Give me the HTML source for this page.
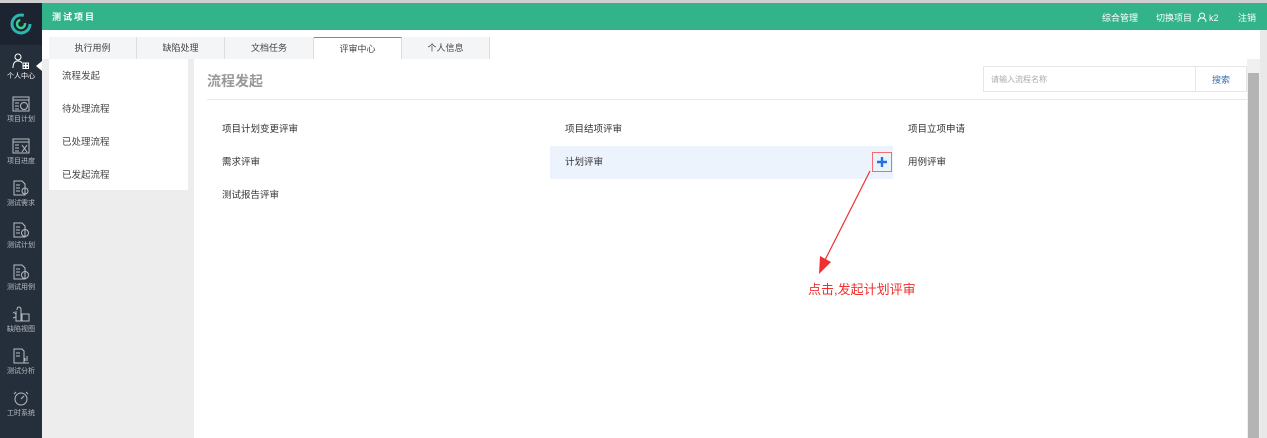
<!DOCTYPE html>
<html><head><meta charset="utf-8"><style>
*{margin:0;padding:0;box-sizing:border-box}
body{width:1267px;height:438px;overflow:hidden;background:#ededed;font-family:"Liberation Sans","Noto Sans CJK SC",sans-serif;position:relative;font-size:9px;color:#333}
.a{position:absolute}
.top{left:0;top:0;width:1267px;height:3px;background:#cfcfcf}
.green{left:42px;top:3px;width:1225px;height:27px;background:#33b38a;color:#fff}
.side{left:0;top:3px;width:42px;height:435px;background:#252f3b}
.logo{left:0;top:3px;width:42px;height:42px;background:#1b2430}
.si{left:0;width:42px;text-align:center;color:#b7bcc3;font-size:7px}
.si svg{display:block;margin:0 auto 2px}
.tab{top:37px;height:22px;background:#f4f5f7;border-right:1px solid #ddd;text-align:center;line-height:22px;font-size:9px;color:#444}
.lm{left:49px;width:139px;color:#444;font-size:9.5px;padding-left:13px}
.it{font-size:9.5px;color:#333}
</style></head><body>
<div class="a top"></div>
<div class="a side"></div>
<div class="a logo"><svg width="42" height="42" viewBox="0 0 42 42"><circle cx="21" cy="21" r="9" fill="none" stroke="#2bb7b0" stroke-width="3" stroke-dasharray="45 12"/><circle cx="21" cy="21" r="4" fill="none" stroke="#3ccf8e" stroke-width="2.5" stroke-dasharray="18 6"/></svg></div>
<div class="a green"><span class="a" style="left:10px;top:7px;font-size:9px;font-weight:bold;letter-spacing:2px">测试项目</span>
<span class="a" style="left:1060px;top:8px;font-size:9px">综合管理</span>
<span class="a" style="left:1114px;top:8px;font-size:9px">切换项目 <svg width="10" height="10" viewBox="0 0 10 10" style="vertical-align:-1px;margin-left:2px"><circle cx="5" cy="3.5" r="2.5" fill="none" stroke="#fff"/><path d="M1 10 Q1 6 5 6 Q9 6 9 10" fill="none" stroke="#fff"/></svg> k2</span>
<span class="a" style="left:1196px;top:8px;font-size:9px">注销</span></div>
<div class="a" style="left:36px;top:61px;border:5px solid transparent;border-right:6px solid #fff;border-left:0"></div>
<div class="a si" style="top:53px;color:#fff"><svg width="18" height="16" viewBox="0 0 18 16" fill="none" stroke="#fff"><circle cx="6" cy="4" r="3"/><path d="M1 15 Q1 8 6 8 Q9 8 10 10"/><rect x="11" y="10" width="2.5" height="2.5"/><rect x="14" y="10" width="2.5" height="2.5"/><rect x="11" y="13" width="2.5" height="2.5"/><rect x="14" y="13" width="2.5" height="2.5"/></svg>个人中心</div>
<div class="a si" style="top:96px"><svg width="18" height="16" viewBox="0 0 18 16" fill="none" stroke="#b7bcc3"><rect x="1" y="1" width="16" height="14"/><path d="M1 4H17M3 7H7M3 10H7M3 13H7"/><circle cx="12" cy="10" r="3.5"/></svg>项目计划</div>
<div class="a si" style="top:138px"><svg width="18" height="16" viewBox="0 0 18 16" fill="none" stroke="#b7bcc3"><rect x="1" y="1" width="16" height="14"/><path d="M1 4H17M3 7H7M3 10H7M3 13H7M10 7L15 14M15 7L10 14"/></svg>项目进度</div>
<div class="a si" style="top:180px"><svg width="18" height="16" viewBox="0 0 18 16" fill="none" stroke="#b7bcc3"><path d="M2 1H10L13 4V15H2Z M4 5H8M4 8H8M4 11H8"/><circle cx="13" cy="11" r="3"/></svg>测试需求</div>
<div class="a si" style="top:222px"><svg width="18" height="16" viewBox="0 0 18 16" fill="none" stroke="#b7bcc3"><path d="M2 1H10L13 4V15H2Z M4 5H8M4 8H8M4 11H8"/><circle cx="13" cy="11" r="3.5"/></svg>测试计划</div>
<div class="a si" style="top:264px"><svg width="18" height="16" viewBox="0 0 18 16" fill="none" stroke="#b7bcc3"><path d="M2 1H10L13 4V15H2Z M4 5H8M4 8H8M4 11H8"/><circle cx="13" cy="11" r="3.5"/></svg>测试用例</div>
<div class="a si" style="top:306px"><svg width="18" height="16" viewBox="0 0 18 16" fill="none" stroke="#b7bcc3"><path d="M5 4Q5 1 7 1Q9 1 9 4V15H4V5M1 6L4 8M1 12L4 11"/><rect x="10" y="8" width="7" height="7"/></svg>缺陷视图</div>
<div class="a si" style="top:348px"><svg width="18" height="16" viewBox="0 0 18 16" fill="none" stroke="#b7bcc3"><path d="M2 1H10L12 3V15H2Z M4 5H8M4 8H8M12 15H17M13 13V10M15 13V8"/></svg>测试分析</div>
<div class="a si" style="top:390px"><svg width="18" height="16" viewBox="0 0 18 16" fill="none" stroke="#b7bcc3"><circle cx="9" cy="9" r="6"/><path d="M9 9L12 6M4 2L2 4M14 2L16 4"/></svg>工时系统</div>
<div class="a" style="left:42px;top:30px;width:1225px;height:29px;background:#fff"></div>
<div class="a tab" style="left:49px;width:88px">执行用例</div>
<div class="a tab" style="left:137px;width:88px">缺陷处理</div>
<div class="a tab" style="left:225px;width:89px">文档任务</div>
<div class="a tab" style="left:314px;width:88px;background:#fff;border-top:1px solid #33b38a">评审中心</div>
<div class="a tab" style="left:402px;width:88px">个人信息</div>
<div class="a" style="left:49px;top:59px;width:139px;height:131px;background:#fff"></div>
<div class="a lm" style="top:68px">流程发起</div>
<div class="a lm" style="top:101px">待处理流程</div>
<div class="a lm" style="top:134px">已处理流程</div>
<div class="a lm" style="top:167px">已发起流程</div>
<div class="a" style="left:194px;top:59px;width:1053px;height:379px;background:#fff"></div>
<div class="a" style="left:207px;top:71px;font-size:14px;font-weight:bold;color:#999">流程发起</div>
<div class="a" style="left:207px;top:99px;width:1040px;height:1px;background:#e8e8e8"></div>
<div class="a" style="left:983px;top:66px;width:264px;height:26px;border:1px solid #e6e6e6"></div>
<div class="a" style="left:1195px;top:66px;width:1px;height:26px;background:#e6e6e6"></div>
<div class="a" style="left:991px;top:74px;color:#aaa;font-size:8px">请输入流程名称</div>
<div class="a" style="left:1212px;top:73px;color:#3a6fb0;font-size:9px">搜索</div>
<div class="a" style="left:1247px;top:59px;width:13px;height:379px;background:#f0f0f0"></div>
<div class="a" style="left:1248px;top:73px;width:11px;height:365px;background:#b4b4b4"></div>
<div class="a" style="left:1260px;top:30px;width:7px;height:408px;background:#e9e9e9"></div>
<div class="a" style="left:550px;top:146px;width:343px;height:33px;background:#edf3fd"></div>
<div class="a it" style="left:222px;top:121px">项目计划变更评审</div>
<div class="a it" style="left:565px;top:121px">项目结项评审</div>
<div class="a it" style="left:908px;top:121px">项目立项申请</div>
<div class="a it" style="left:222px;top:154px">需求评审</div>
<div class="a it" style="left:565px;top:154px">计划评审</div>
<div class="a it" style="left:908px;top:154px">用例评审</div>
<div class="a it" style="left:222px;top:187px">测试报告评审</div>
<div class="a" style="left:872px;top:152px;width:20px;height:20px;border:1px solid #f07070"><svg width="18" height="18" viewBox="0 0 18 18"><path d="M9 4V14M4 9H14" stroke="#1a73e8" stroke-width="2.4"/></svg></div>
<svg class="a" style="left:0;top:0" width="1267" height="438"><line x1="870" y1="171" x2="824" y2="262" stroke="#f03030" stroke-width="1.2"/><polygon points="819,274 820,256 831,262" fill="#f03030"/></svg>
<div class="a" style="left:808px;top:279px;color:#f03030;font-size:13px">点击,发起计划评审</div>
</body></html>
